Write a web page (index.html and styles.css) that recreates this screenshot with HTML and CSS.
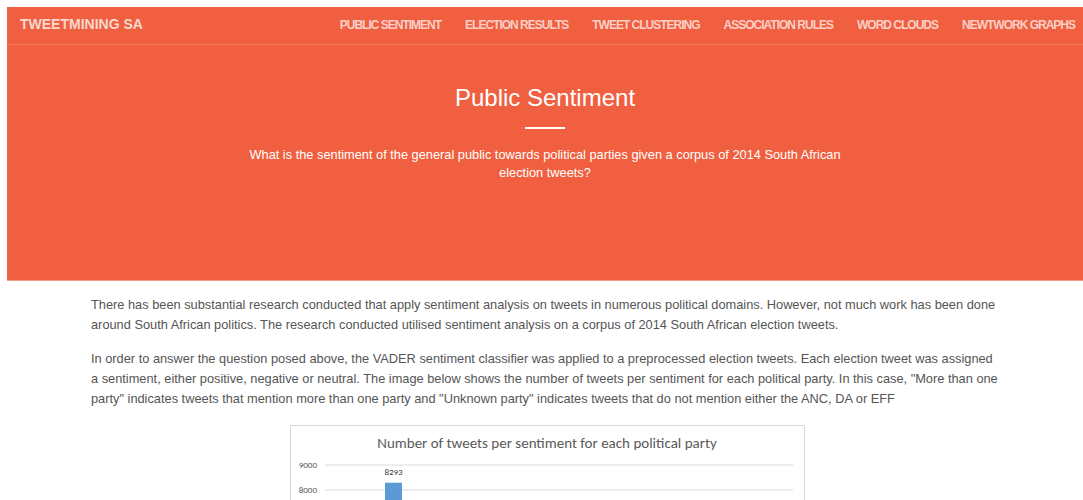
FILE: index.html
```html
<!DOCTYPE html>
<html lang="en">
<head>
<meta charset="utf-8">
<title>TweetMining SA - Public Sentiment</title>
<link rel="stylesheet" href="styles.css">
</head>
<body>
<nav class="navbar">
  <a class="brand" href="#">TWEETMINING SA</a>
  <ul class="nav-links">
    <li><a href="#">PUBLIC SENTIMENT</a></li>
    <li><a href="#">ELECTION RESULTS</a></li>
    <li><a href="#">TWEET CLUSTERING</a></li>
    <li><a href="#">ASSOCIATION RULES</a></li>
    <li><a href="#">WORD CLOUDS</a></li>
    <li><a href="#">NEWTWORK GRAPHS</a></li>
  </ul>
</nav>

<header class="hero">
  <h1 class="hero-title">Public Sentiment</h1>
  <hr class="hero-rule">
  <p class="hero-lead">What is the sentiment of the general public towards political parties given a corpus of 2014 South African election tweets?</p>
</header>

<main class="content">
  <p>There has been substantial research conducted that apply sentiment analysis on tweets in numerous political domains. However, not much work has been done around South African politics. The research conducted utilised sentiment analysis on a corpus of 2014 South African election tweets.</p>
  <p>In order to answer the question posed above, the VADER sentiment classifier was applied to a preprocessed election tweets. Each election tweet was assigned a sentiment, either positive, negative or neutral. The image below shows the number of tweets per sentiment for each political party. In this case, "More than one party" indicates tweets that mention more than one party and "Unknown party" indicates tweets that do not mention either the ANC, DA or EFF</p>

  <figure class="chart">
    <svg class="chart-svg" width="513" height="330" viewBox="0 0 513 330">
      <text class="chart-title" x="256" y="22">Number of tweets per sentiment for each political party</text>
      <g class="grid">
        <line x1="34" y1="39" x2="502" y2="39"/>
        <line x1="34" y1="64" x2="502" y2="64"/>
        <line x1="34" y1="89" x2="502" y2="89"/>
        <line x1="34" y1="114" x2="502" y2="114"/>
        <line x1="34" y1="139" x2="502" y2="139"/>
        <line x1="34" y1="164" x2="502" y2="164"/>
        <line x1="34" y1="189" x2="502" y2="189"/>
        <line x1="34" y1="214" x2="502" y2="214"/>
        <line x1="34" y1="239" x2="502" y2="239"/>
        <line x1="34" y1="264" x2="502" y2="264"/>
      </g>
      <g class="axis">
        <text x="26" y="42">9000</text>
        <text x="26" y="67">8000</text>
        <text x="26" y="92">7000</text>
        <text x="26" y="117">6000</text>
        <text x="26" y="142">5000</text>
        <text x="26" y="167">4000</text>
        <text x="26" y="192">3000</text>
        <text x="26" y="217">2000</text>
        <text x="26" y="242">1000</text>
        <text x="26" y="267">0</text>
      </g>
      <!-- bars: positive / negative / neutral per party -->
      <g class="bars">
        <rect class="pos" x="94" y="56.7" width="17" height="207.3"/>
        <rect class="neg" x="112" y="156" width="17" height="108"/>
        <rect class="neu" x="130" y="110" width="17" height="154"/>
        <rect class="pos" x="188" y="190" width="17" height="74"/>
        <rect class="neg" x="206" y="205" width="17" height="59"/>
        <rect class="neu" x="224" y="198" width="17" height="66"/>
        <rect class="pos" x="282" y="180" width="17" height="84"/>
        <rect class="neg" x="300" y="210" width="17" height="54"/>
        <rect class="neu" x="318" y="195" width="17" height="69"/>
        <rect class="pos" x="376" y="170" width="17" height="94"/>
        <rect class="neg" x="394" y="200" width="17" height="64"/>
        <rect class="neu" x="412" y="188" width="17" height="76"/>
      </g>
      <g class="values">
        <text x="102.5" y="49">8293</text>
      </g>
    </svg>
  </figure>
</main>
</body>
</html>
```

FILE: styles.css
```css
html, body {
  margin: 0;
  padding: 0;
}

body {
  padding: 7px 0 0 7px;
  background: #fff;
  font-family: "Liberation Sans", Arial, sans-serif;
  color: #555;
}

/* top navigation bar */
.navbar {
  display: flex;
  align-items: center;
  justify-content: space-between;
  height: 34px;
  padding: 0 8px 3px 13px;
  background: #f05f40;
  border-bottom: 1px solid #f37d64;
}

.brand {
  font-weight: bold;
  font-size: 14px;
  color: #fbd8cf;
  text-decoration: none;
}

.nav-links {
  display: flex;
  gap: 24px;
  list-style: none;
  margin: 0;
  padding: 0;
}

.nav-links a {
  font-weight: bold;
  font-size: 12px;
  letter-spacing: -1px;
  color: #fbcfc6;
  text-decoration: none;
}

/* page header */
.hero {
  background: #f05f40;
  border-bottom: 1px solid #f59c88;
  padding: 40px 0 98px;
  text-align: center;
  color: #fff;
}

.hero-title {
  margin: 0;
  font-size: 24px;
  font-weight: normal;
  line-height: 26px;
}

.hero-rule {
  width: 40px;
  height: 2px;
  margin: 16px auto 17px;
  border: 0;
  background: #fff;
}

.hero-lead {
  max-width: 610px;
  margin: 0 auto;
  font-size: 12.8px;
  line-height: 18px;
}

/* article body */
.content {
  width: 912px;
  margin: 14px 0 0 84px;
}

.content p {
  margin: 0 0 14px;
  font-size: 12.8px;
  line-height: 20px;
}

.chart {
  width: 513px;
  margin: 16px auto 0;
  border: 1px solid #d9d9d9;
  background: #fff;
}

.chart-svg {
  display: block;
  font-family: "Carlito", "Open Sans", sans-serif;
}

.chart-title {
  font-size: 15px;
  fill: #595959;
  text-anchor: middle;
}

.grid line {
  stroke: #d9d9d9;
  stroke-width: 1;
}

.axis text {
  font-size: 9px;
  fill: #595959;
  text-anchor: end;
}

.values text {
  font-size: 9px;
  fill: #404040;
  text-anchor: middle;
}

.bars .pos { fill: #5b9bd5; }
.bars .neg { fill: #ed7d31; }
.bars .neu { fill: #a5a5a5; }
```
